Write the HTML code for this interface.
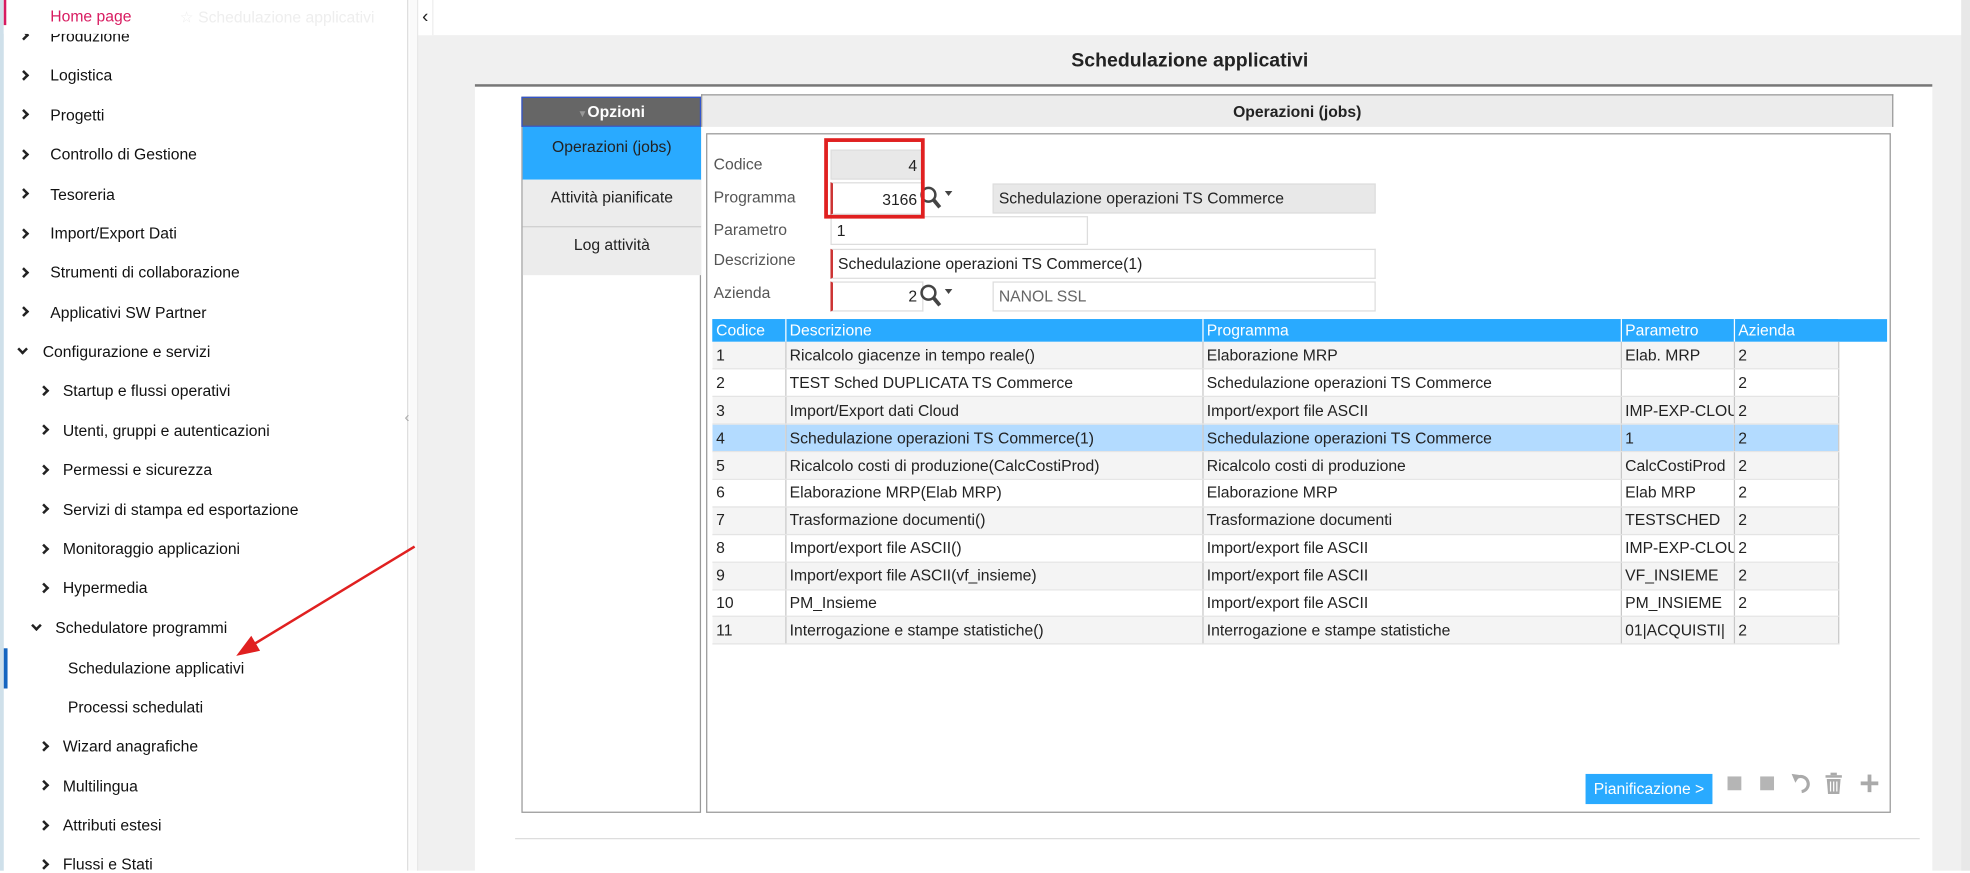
<!DOCTYPE html>
<html><head><meta charset="utf-8"><style>
*{box-sizing:border-box;margin:0;padding:0}
html,body{width:1970px;height:871px;overflow:hidden;background:#fff}
#w{position:absolute;left:0;top:0;width:1568px;height:693px;transform:scale(1.25638);transform-origin:0 0;font-family:"Liberation Sans",sans-serif;color:#222}
.a{position:absolute}
.side{left:0;top:0;width:325px;height:693px;background:#fff;border-right:1px solid #ddd}
.si{position:absolute;font-size:12.5px;color:#111;white-space:nowrap}
.chev{position:absolute;width:6px;height:6px;border-right:2px solid #222;border-bottom:2px solid #222}
.r{transform:rotate(-45deg)}
.d{transform:rotate(45deg)}
.lbl{position:absolute;font-size:12.5px;color:#555}
.fld{position:absolute;border:1px solid #ddd;background:#fff;font-size:12.5px;padding:0 4px;line-height:22px;white-space:nowrap;overflow:hidden}
table{border-collapse:collapse;font-size:12.5px}
td{height:21.9px;padding:0 3px;border-right:1px solid #c8c8c8;border-bottom:1px solid #e4e4e4;white-space:nowrap;overflow:hidden}
th{height:18px;padding:0 3px;text-align:left;font-weight:normal;color:#fff;background:#29aaff;border-right:1px solid #fff}
th:last-child{border-right:none}
</style></head><body><div id="w">
<div class="a side">
  <div class="a" style="left:0;top:0;width:3px;height:693px;background:#cfe0ea"></div>
  <div class="chev r" style="left:16px;top:25px"></div>
  <div class="si" style="left:40px;top:22px">Produzione</div>
  <div class="a" style="left:3px;top:0;width:320px;height:27px;background:#fff"></div>
  <div class="a" style="left:3px;top:0;width:2px;height:20px;background:#d81b60"></div>
  <div class="si" style="left:40px;top:6px;color:#d81b60">Home page</div>
  <div class="si" style="left:143px;top:6px;color:#eee">☆ Schedulazione applicativi</div>
  <div class="chev r" style="left:16px;top:57px"></div><div class="si" style="left:40px;top:53px">Logistica</div>
  <div class="chev r" style="left:16px;top:88px"></div><div class="si" style="left:40px;top:85px">Progetti</div>
  <div class="chev r" style="left:16px;top:120px"></div><div class="si" style="left:40px;top:116px">Controllo di Gestione</div>
  <div class="chev r" style="left:16px;top:151px"></div><div class="si" style="left:40px;top:148px">Tesoreria</div>
  <div class="chev r" style="left:16px;top:183px"></div><div class="si" style="left:40px;top:179px">Import/Export Dati</div>
  <div class="chev r" style="left:16px;top:214px"></div><div class="si" style="left:40px;top:210px">Strumenti di collaborazione</div>
  <div class="chev r" style="left:16px;top:245px"></div><div class="si" style="left:40px;top:242px">Applicativi SW Partner</div>
  <div class="chev d" style="left:15px;top:275px"></div><div class="si" style="left:34px;top:273px">Configurazione e servizi</div>
  <div class="chev r" style="left:32px;top:308px"></div><div class="si" style="left:50px;top:304px">Startup e flussi operativi</div>
  <div class="chev r" style="left:32px;top:339px"></div><div class="si" style="left:50px;top:336px">Utenti, gruppi e autenticazioni</div>
  <div class="chev r" style="left:32px;top:371px"></div><div class="si" style="left:50px;top:367px">Permessi e sicurezza</div>
  <div class="chev r" style="left:32px;top:402px"></div><div class="si" style="left:50px;top:399px">Servizi di stampa ed esportazione</div>
  <div class="chev r" style="left:32px;top:434px"></div><div class="si" style="left:50px;top:430px">Monitoraggio applicazioni</div>
  <div class="chev r" style="left:32px;top:465px"></div><div class="si" style="left:50px;top:461px">Hypermedia</div>
  <div class="chev d" style="left:26px;top:495px"></div><div class="si" style="left:44px;top:493px">Schedulatore programmi</div>
  <div class="a" style="left:3px;top:516px;width:3px;height:32px;background:#1565c0"></div>
  <div class="si" style="left:54px;top:525px">Schedulazione applicativi</div>
  <div class="si" style="left:54px;top:556px">Processi schedulati</div>
  <div class="chev r" style="left:32px;top:591px"></div><div class="si" style="left:50px;top:587px">Wizard anagrafiche</div>
  <div class="chev r" style="left:32px;top:622px"></div><div class="si" style="left:50px;top:619px">Multilingua</div>
  <div class="chev r" style="left:32px;top:654px"></div><div class="si" style="left:50px;top:650px">Attributi estesi</div>
  <div class="chev r" style="left:32px;top:685px"></div><div class="si" style="left:50px;top:681px">Flussi e Stati</div>
</div>
<div class="a" style="left:326px;top:0;width:7px;height:693px;background:#fafafa;border-right:1px solid #e6e6e6"></div>
<div class="a" style="left:322px;top:325px;font-size:12px;color:#aaa">‹</div>
<div class="a" style="left:333px;top:0;width:1235px;height:693px;background:#f0f0f0"></div>
<div class="a" style="left:333px;top:0;width:1235px;height:28px;background:#fff"></div>
<div class="a" style="left:333px;top:0;width:12px;height:28px;background:#fff;border-right:1px solid #eee;font-size:15px;line-height:28px;text-align:center">‹</div>
<div class="a" style="left:1561px;top:0;width:7px;height:693px;background:#e8e8e8"></div>
<div class="a" style="left:333px;top:40px;width:1228px;text-align:center;font-weight:bold;font-size:15.5px">Schedulazione applicativi</div>
<div class="a" style="left:378px;top:67px;width:1160px;height:626px;background:#fff;border-top:2px solid #777"></div>
<div class="a" style="left:410px;top:667px;width:1118px;height:1px;background:#ddd"></div>
<div class="a" style="left:415px;top:77px;width:143px;height:570px;border:1px solid #999;background:#fff"></div>
<div class="a" style="left:415px;top:77px;width:143px;height:24px;background:#666;border:1px solid #3355cc;color:#fff;font-weight:bold;font-size:12.5px;line-height:22px;text-align:center"><span style="color:#999;font-size:8px">▼</span>Opzioni</div>
<div class="a" style="left:416px;top:101px;width:142px;height:42px;background:#29aaff;font-size:12.5px;text-align:center;padding-top:9px;color:#222">Operazioni (jobs)</div>
<div class="a" style="left:416px;top:143px;width:142px;height:38px;background:#ececec;border-bottom:1px solid #ccc;font-size:12.5px;text-align:center;padding-top:7px">Attività pianificate</div>
<div class="a" style="left:416px;top:181px;width:142px;height:38px;background:#ececec;font-size:12.5px;text-align:center;padding-top:7px">Log attività</div>
<div class="a" style="left:558px;top:75px;width:949px;height:26px;background:#ececec;border:1px solid #999;border-bottom:none;font-weight:bold;font-size:12.5px;text-align:center;line-height:26px">Operazioni (jobs)</div>
<div class="a" style="left:562px;top:106px;width:943px;height:541px;border:1px solid #999;background:#fff"></div>
<div class="lbl" style="left:568px;top:124px">Codice</div>
<div class="fld" style="left:661px;top:119px;width:74px;height:24px;background:#e8e8e8;text-align:right;line-height:24px">4</div>
<div class="lbl" style="left:568px;top:150px">Programma</div>
<div class="fld" style="left:661px;top:145px;width:74px;height:26px;border-left:2px solid #c33;text-align:right;line-height:26px">3166</div>
<div class="lbl" style="left:568px;top:176px">Parametro</div>
<div class="fld" style="left:661px;top:172px;width:205px;height:23px">1</div>
<div class="lbl" style="left:568px;top:200px">Descrizione</div>
<div class="fld" style="left:661px;top:198px;width:434px;height:24px;border-left:2px solid #c33">Schedulazione operazioni TS Commerce(1)</div>
<div class="lbl" style="left:568px;top:226px">Azienda</div>
<div class="fld" style="left:661px;top:224px;width:74px;height:24px;border-left:2px solid #c33;text-align:right">2</div>
<div class="fld" style="left:790px;top:146px;width:305px;height:24px;background:#e8e8e8">Schedulazione operazioni TS Commerce</div>
<div class="fld" style="left:790px;top:224px;width:305px;height:24px;color:#666">NANOL SSL</div>
<svg class="a" style="left:731px;top:147px" width="30" height="22" viewBox="0 0 30 22"><circle cx="8" cy="8" r="5.5" fill="none" stroke="#444" stroke-width="2"/><line x1="12" y1="12" x2="17" y2="18" stroke="#444" stroke-width="3"/><path d="M21 5h6l-3 4z" fill="#444"/></svg>
<svg class="a" style="left:731px;top:225px" width="30" height="22" viewBox="0 0 30 22"><circle cx="8" cy="8" r="5.5" fill="none" stroke="#444" stroke-width="2"/><line x1="12" y1="12" x2="17" y2="18" stroke="#444" stroke-width="3"/><path d="M21 5h6l-3 4z" fill="#444"/></svg>
<div class="a" style="left:656px;top:110px;width:80px;height:64px;border:3px solid #e02020"></div>
<div class="a" style="left:567px;top:254px;width:935px;height:18px;background:#29aaff"></div>
<table class="a" style="left:567px;top:254px;width:896px;table-layout:fixed">
<colgroup><col style="width:58px"><col style="width:332px"><col style="width:333px"><col style="width:90px"><col style="width:83px"></colgroup>
<tr><th>Codice</th><th>Descrizione</th><th>Programma</th><th>Parametro</th><th>Azienda</th></tr>
<tr style="background:#f4f4f4"><td>1</td><td>Ricalcolo giacenze in tempo reale()</td><td>Elaborazione MRP</td><td>Elab. MRP</td><td>2</td></tr>
<tr><td>2</td><td>TEST Sched DUPLICATA TS Commerce</td><td>Schedulazione operazioni TS Commerce</td><td></td><td>2</td></tr>
<tr style="background:#f4f4f4"><td>3</td><td>Import/Export dati Cloud</td><td>Import/export file ASCII</td><td>IMP-EXP-CLOUD</td><td>2</td></tr>
<tr style="background:#b3dbff"><td>4</td><td>Schedulazione operazioni TS Commerce(1)</td><td>Schedulazione operazioni TS Commerce</td><td>1</td><td>2</td></tr>
<tr style="background:#f4f4f4"><td>5</td><td>Ricalcolo costi di produzione(CalcCostiProd)</td><td>Ricalcolo costi di produzione</td><td>CalcCostiProd</td><td>2</td></tr>
<tr><td>6</td><td>Elaborazione MRP(Elab MRP)</td><td>Elaborazione MRP</td><td>Elab MRP</td><td>2</td></tr>
<tr style="background:#f4f4f4"><td>7</td><td>Trasformazione documenti()</td><td>Trasformazione documenti</td><td>TESTSCHED</td><td>2</td></tr>
<tr><td>8</td><td>Import/export file ASCII()</td><td>Import/export file ASCII</td><td>IMP-EXP-CLOUD</td><td>2</td></tr>
<tr style="background:#f4f4f4"><td>9</td><td>Import/export file ASCII(vf_insieme)</td><td>Import/export file ASCII</td><td>VF_INSIEME</td><td>2</td></tr>
<tr><td>10</td><td>PM_Insieme</td><td>Import/export file ASCII</td><td>PM_INSIEME</td><td>2</td></tr>
<tr style="background:#f4f4f4"><td>11</td><td>Interrogazione e stampe statistiche()</td><td>Interrogazione e stampe statistiche</td><td>01|ACQUISTI|</td><td>2</td></tr>
</table>
<div class="a" style="left:1262px;top:616px;width:101px;height:24px;background:#29aaff;color:#fff;font-size:12.5px;line-height:24px;text-align:center">Pianificazione &gt;</div>
<div class="a" style="left:1375px;top:618px;width:11px;height:11px;background:#b5b5b5"></div>
<div class="a" style="left:1401px;top:618px;width:11px;height:11px;background:#b5b5b5"></div>
<svg class="a" style="left:1425px;top:613px" width="80" height="22" viewBox="0 0 80 22"><path d="M5 6 A6 6 0 1 1 9 17" fill="none" stroke="#aaa" stroke-width="2.5"/><path d="M1 3l7 1-4 6z" fill="#aaa"/><rect x="28" y="4" width="13" height="2" fill="#aaa"/><rect x="32" y="2" width="5" height="2" fill="#aaa"/><path d="M29 7h11l-1 12h-9z" fill="#aaa"/><path d="M32 9v8M34.5 9v8M37 9v8" stroke="#fff" stroke-width="1"/><rect x="56" y="9" width="14" height="3" fill="#aaa"/><rect x="61.5" y="3.5" width="3" height="14" fill="#aaa"/></svg>
<svg class="a" style="left:0;top:0" width="1568" height="693"><line x1="330" y1="435" x2="200" y2="514" stroke="#e02020" stroke-width="2"/><path d="M188 522 L200 506 L207 518 Z" fill="#e02020"/></svg>
</div></body></html>
